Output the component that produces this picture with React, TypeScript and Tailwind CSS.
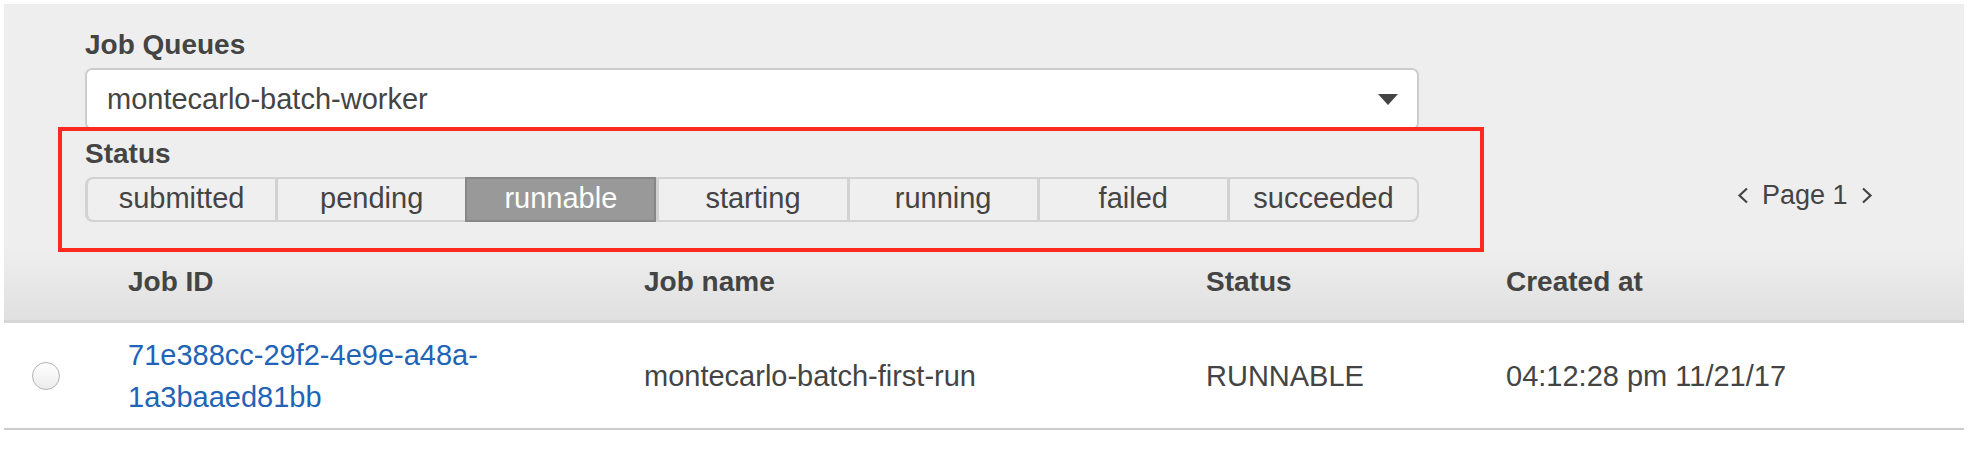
const statuses = ['submitted', 'pending', 'runnable', 'starting', 'running', 'failed', 'succeeded'];

function Chevron({ dir }: { dir: 'left' | 'right' }) {
  return (
    <svg width="12" height="17" viewBox="0 0 12 17" className="shrink-0">
      <polyline
        points={dir === 'left' ? '10,1.5 2.5,8.5 10,15.5' : '2,1.5 9.5,8.5 2,15.5'}
        fill="none"
        stroke="#444444"
        strokeWidth="2.2"
      />
    </svg>
  );
}

export default function App() {
  const active = 'runnable';

  return (
    <div
      className="relative min-h-[456px] w-[1970px] bg-white pt-[4px] pl-[4px] text-[#444444]"
      style={{ fontFamily: '"Liberation Sans", Arial, Helvetica, sans-serif' }}
    >
      <div className="w-[1960px]">
        {/* filters */}
        <div className="flex bg-[#eeeeee] pt-[25px] pb-[28px] pl-[81px]">
          <div className="flex w-[1334px] flex-col">
            <div className="text-[28px] leading-[32px] font-bold">Job Queues</div>
            <div className="mt-[7px] flex h-[62px] items-center justify-between rounded-[7px] border-2 border-[#cccccc] bg-white pr-[19px] pl-[20px]">
              <span className="text-[29px] leading-[32px]">montecarlo-batch-worker</span>
              <svg width="20" height="11" viewBox="0 0 20 11">
                <polygon points="0,0 20,0 10,11" fill="#444444" />
              </svg>
            </div>
            <div className="mt-[8px] text-[28px] leading-[32px] font-bold">Status</div>
            <div className="mt-[7px] flex h-[45px]">
              {statuses.map((s, i) => {
                const on = s === active;
                return (
                  <div
                    key={s}
                    className={clsxLite(
                      'flex flex-1 items-center justify-center pb-[3px] text-[29px] leading-[32px]',
                      on
                        ? 'border-2 border-[#878787] bg-[#999999] text-white'
                        : 'border-y-2 border-l-[3px] border-[#d2d2d2] bg-[#efefef]',
                      i === 0 && 'rounded-l-[8px] border-l-2',
                      i === statuses.length - 1 && 'rounded-r-[8px] border-r-2',
                    )}
                  >
                    {s}
                  </div>
                );
              })}
            </div>
          </div>
          <div className="mb-[11px] ml-[318px] flex items-center gap-[13px] self-end">
            <Chevron dir="left" />
            <span className="text-[27px] leading-[32px]">Page 1</span>
            <Chevron dir="right" />
          </div>
        </div>

        {/* table header */}
        <div className="grid h-[73px] grid-cols-[124px_516px_562px_300px_1fr] border-b-[3px] border-[#d6d6d6] bg-linear-to-b from-[#eeeeee] to-[#e0e0e0] pt-[16px] text-[28px] leading-[32px] font-bold">
          <div />
          <div>Job ID</div>
          <div>Job name</div>
          <div>Status</div>
          <div>Created at</div>
        </div>

        {/* row */}
        <div className="grid h-[107px] grid-cols-[124px_516px_562px_300px_1fr] items-center border-b-2 border-[#cccccc] text-[29px] leading-[42px]">
          <div className="pl-[28px]">
            <span className="block h-[28px] w-[28px] rounded-full border-[1.5px] border-[#b3b3b3] bg-linear-to-b from-white to-[#ececec]" />
          </div>
          <div className="pt-[1px] text-[#1f64b6]">
            71e388cc-29f2-4e9e-a48a-
            <br />
            1a3baaed81bb
          </div>
          <div>montecarlo-batch-first-run</div>
          <div>RUNNABLE</div>
          <div>04:12:28 pm 11/21/17</div>
        </div>
      </div>

      {/* annotation highlight */}
      <div className="pointer-events-none absolute top-[127px] left-[58px] h-[125px] w-[1426px] border-4 border-[#fc2a1e]" />
    </div>
  );
}

function clsxLite(...parts: (string | false)[]) {
  return parts.filter(Boolean).join(' ');
}
